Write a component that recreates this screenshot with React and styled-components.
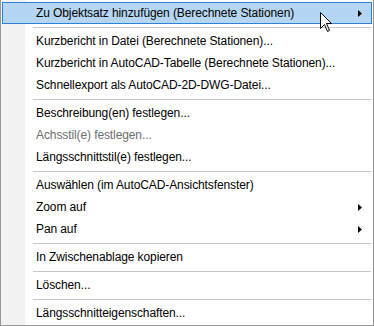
import React from "react";
import styled, { createGlobalStyle } from "styled-components";

const GlobalStyle = createGlobalStyle`
  html, body {
    margin: 0;
    padding: 0;
    background: #ffffff;
  }
`;

const items = [
  { label: "Zu Objektsatz hinzufügen (Berechnete Stationen)", sub: true, active: true },
  { sep: true },
  { label: "Kurzbericht in Datei (Berechnete Stationen)..." },
  { label: "Kurzbericht in AutoCAD-Tabelle (Berechnete Stationen)..." },
  { label: "Schnellexport als AutoCAD-2D-DWG-Datei..." },
  { sep: true },
  { label: "Beschreibung(en) festlegen..." },
  { label: "Achsstil(e) festlegen...", disabled: true },
  { label: "Längsschnittstil(e) festlegen..." },
  { sep: true },
  { label: "Auswählen (im AutoCAD-Ansichtsfenster)" },
  { label: "Zoom auf", sub: true },
  { label: "Pan auf", sub: true },
  { sep: true },
  { label: "In Zwischenablage kopieren" },
  { sep: true },
  { label: "Löschen..." },
  { sep: true },
  { label: "Längsschnitteigenschaften..." },
];

export default function App() {
  return (
    <>
      <GlobalStyle />
      <Menu>
        {items.map((it, i) =>
          it.sep ? (
            <Separator key={i}>
              <Line />
            </Separator>
          ) : (
            <Item key={i} $active={it.active} $disabled={it.disabled}>
              <Label>{it.label}</Label>
              {it.sub && (
                <svg width="4" height="7" viewBox="0 0 4 7">
                  <path d="M0 0 L4 3.5 L0 7 Z" fill="#000" />
                </svg>
              )}
            </Item>
          )
        )}
        <Cursor width="13" height="21" viewBox="0 0 13 21">
          <path
            d="M0.5 0.5 L0.5 16.5 L4.5 12.5 L7.5 19.5 L9.5 18.5 L6.5 11.5 L11.5 11.5 Z"
            fill="#fff"
            stroke="#000"
            strokeWidth="1"
            strokeLinejoin="miter"
          />
        </Cursor>
      </Menu>
    </>
  );
}

const Menu = styled.div`
  position: relative;
  width: 374px;
  height: 326px;
  box-sizing: border-box;
  border: 1px solid #979797;
  border-top: 0;
  padding: 2px 1px 0 1px;
  background: linear-gradient(to right, #f2f2f2 24px, #ffffff 24px);
  font-family: "Liberation Sans", Arial, sans-serif;
  font-size: 12px;
  letter-spacing: -0.1px;
  color: #000;
  display: flex;
  flex-direction: column;
`;

const Item = styled.div`
  height: 22px;
  box-sizing: border-box;
  display: flex;
  align-items: center;
  padding: 0 9px 0 33px;
  border: 1px solid ${(p) => (p.$active ? "#2e82d6" : "transparent")};
  background: ${(p) => (p.$active ? "#b5d6f3" : "transparent")};
  color: ${(p) => (p.$disabled ? "#6d6d6d" : "#000")};
`;

const Label = styled.span`
  flex: 1;
  white-space: nowrap;
`;

const Separator = styled.div`
  height: 6px;
  box-sizing: border-box;
  padding: 3px 1px 0 31px;
`;

const Line = styled.div`
  height: 1px;
  background: #c8c8c8;
`;

const Cursor = styled.svg`
  position: absolute;
  left: 319px;
  top: 12px;
`;
